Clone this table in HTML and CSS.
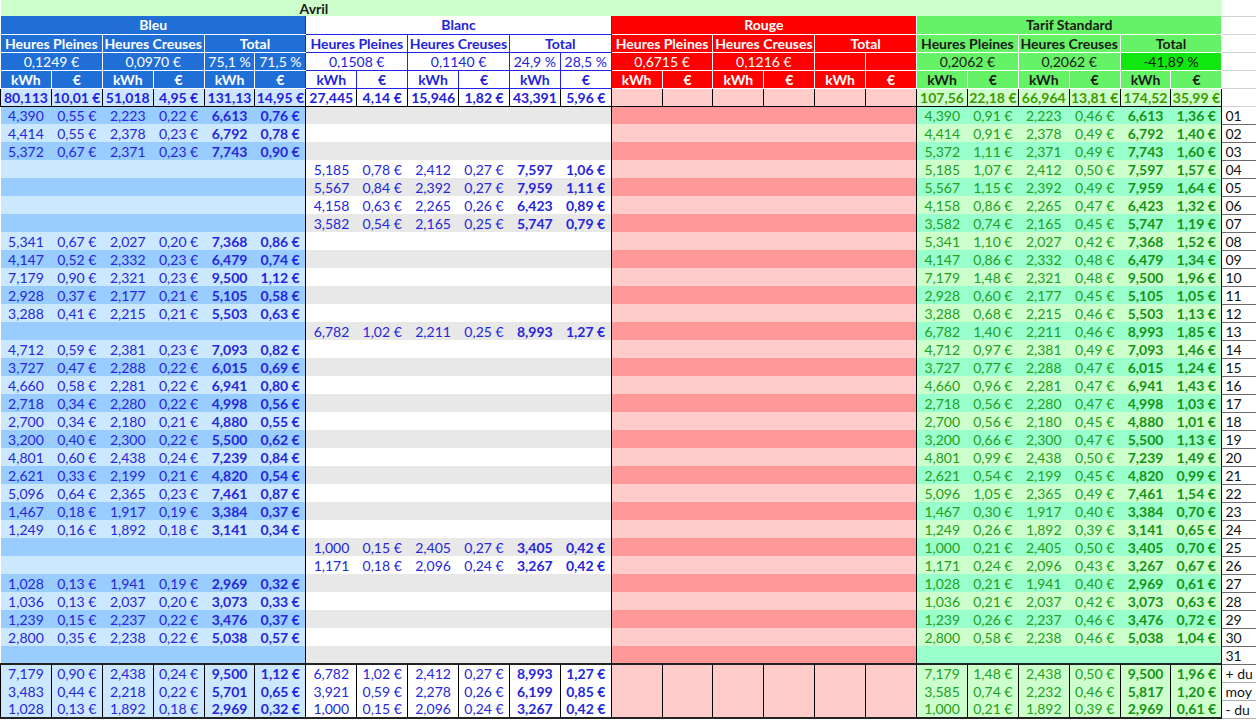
FILE: index.html
```html
<!DOCTYPE html>
<html lang="fr">
<head>
<meta charset="utf-8">
<title>Avril</title>
<link rel="stylesheet" href="styles.css">
</head>
<body>
<table class="sheet">
<colgroup>
<col class="c"><col class="c"><col class="c"><col class="c"><col class="c"><col class="c">
<col class="c"><col class="c"><col class="c"><col class="c"><col class="c"><col class="c">
<col class="c"><col class="c"><col class="c"><col class="c"><col class="c"><col class="c">
<col class="c"><col class="c"><col class="c"><col class="c"><col class="c"><col class="c">
<col class="d">
</colgroup>
<tbody id="sheet-body">
<tr class="r0"><td colspan="24" class="title">Avril</td><td class="dh"></td></tr>
<tr class="h h1">
<td colspan="6" class="hb gl">Bleu</td>
<td colspan="6" class="hw gl">Blanc</td>
<td colspan="6" class="hr">Rouge</td>
<td colspan="6" class="hg">Tarif Standard</td>
<td class="dh"></td>
</tr>
<tr class="h">
<td colspan="2" class="hb">Heures Pleines</td><td colspan="2" class="hb">Heures Creuses</td><td colspan="2" class="hb gl">Total</td>
<td colspan="2" class="hw">Heures Pleines</td><td colspan="2" class="hw">Heures Creuses</td><td colspan="2" class="hw gl">Total</td>
<td colspan="2" class="hr">Heures Pleines</td><td colspan="2" class="hr">Heures Creuses</td><td colspan="2" class="hr">Total</td>
<td colspan="2" class="hg">Heures Pleines</td><td colspan="2" class="hg">Heures Creuses</td><td colspan="2" class="hg">Total</td>
<td class="dh"></td>
</tr>
<tr class="h pr">
<td colspan="2" class="hb">0,1249 €</td><td colspan="2" class="hb">0,0970 €</td><td class="hb">75,1 %</td><td class="hb gl">71,5 %</td>
<td colspan="2" class="hw">0,1508 €</td><td colspan="2" class="hw">0,1140 €</td><td class="hw">24,9 %</td><td class="hw gl">28,5 %</td>
<td colspan="2" class="hr">0,6715 €</td><td colspan="2" class="hr">0,1216 €</td><td class="hr"></td><td class="hr"></td>
<td colspan="2" class="hg">0,2062 €</td><td colspan="2" class="hg">0,2062 €</td><td colspan="2" class="hg pct">-41,89 %</td>
<td class="dh"></td>
</tr>
<tr class="h">
<td class="hb">kWh</td><td class="hb">€</td><td class="hb">kWh</td><td class="hb">€</td><td class="hb">kWh</td><td class="hb gl">€</td>
<td class="hw">kWh</td><td class="hw">€</td><td class="hw">kWh</td><td class="hw">€</td><td class="hw">kWh</td><td class="hw gl">€</td>
<td class="hr">kWh</td><td class="hr">€</td><td class="hr">kWh</td><td class="hr">€</td><td class="hr">kWh</td><td class="hr">€</td>
<td class="hg">kWh</td><td class="hg">€</td><td class="hg">kWh</td><td class="hg">€</td><td class="hg">kWh</td><td class="hg">€</td>
<td class="dh"></td>
</tr>
<tr class="tot-row">
<td class="tb">80,113</td><td class="tb">10,01 €</td><td class="tb">51,018</td><td class="tb">4,95 €</td><td class="tb">131,13</td><td class="tb">14,95 €</td>
<td class="tw">27,445</td><td class="tw">4,14 €</td><td class="tw">15,946</td><td class="tw">1,82 €</td><td class="tw">43,391</td><td class="tw">5,96 €</td>
<td class="trd"></td><td class="trd"></td><td class="trd"></td><td class="trd"></td><td class="trd"></td><td class="trd"></td>
<td class="tg">107,56</td><td class="tg">22,18 €</td><td class="tg">66,964</td><td class="tg">13,81 €</td><td class="tg">174,52</td><td class="tg">35,99 €</td>
<td class="dh"></td>
</tr>
</tbody>
</table>
<script src="script.js"></script>
</body>
</html>
```

FILE: styles.css
```css
html, body {
  margin: 0;
  padding: 0;
  background: #ffffff;
  overflow: hidden;
}

body {
  font-family: Lato, "Liberation Sans", sans-serif;
  font-size: 14px;
  color: #111;
}

.sheet {
  width: 1256px;
  border-collapse: collapse;
  table-layout: fixed;
}

col.c { width: 50.9px; }
col.d { width: 34.4px; }

.sheet tr { height: 18px; }
.sheet tr.r0 { height: 16px; }

.sheet td {
  padding: 0;
  line-height: 15px;
  text-align: center;
  white-space: nowrap;
  overflow: hidden;
  border: 0;
}

/* title row */
.title {
  background: #ccffcc;
  font-weight: 700;
  text-align: left !important;
  padding-left: 299px !important;
  color: #1a1a1a;
}
.dh {
  background: #fff;
  border-bottom: 1px solid #d4d4d4 !important;
}

/* header rows */
.h td { font-weight: 700; }
.h.pr td { font-weight: 400; }

.hb {
  background: #1f6fd7;
  color: #fff;
  border: 1px solid #fff !important;
}
.hb.gl { border-right-color: #2323e6 !important; }

.hw {
  background: #fff;
  color: #2222dd;
  border: 1px solid #2323e6 !important;
}

.hr {
  background: #ff0000;
  color: #fff;
  border: 1px solid #ffffff !important;
}

.hg {
  background: #66f266;
  color: #1a1a1a;
  border: 1px solid #ffffff !important;
}
.hg.pct { background: #10e610; }

.h1 td { border-top: none !important; }

/* totals row */
.tot-row td { font-weight: 700; }
.tot-row td:not(.dh) { border: 1px solid #000 !important; }
.tb { background: #cce6ff; color: #2222dd; }
.tw { background: #fff; color: #2222dd; }
.trd { background: #ffcccc; }
.tg { background: #ccffcc; color: #3d9a00; }

/* data rows */
.bleu, .blanc { color: #2626dc; }
.rouge { color: #c00; }
.vert { color: #22a022; }
.tot { font-weight: 700; }
.vert.tot { color: #149414; }
.ge { border-right: 1px solid #000 !important; }

.odd .bleu { background: #99ccff; }
.even .bleu { background: #cce8ff; }
.odd .blanc { background: #e8e8e8; }
.even .blanc { background: #ffffff; }
.odd .rouge { background: #ff9999; }
.even .rouge { background: #ffcccc; }
.odd .vert { background: #99ffcc; }
.even .vert { background: #ccffcc; }

.day {
  background: #fff;
  color: #111;
  text-align: left !important;
  padding-left: 3px !important;
  border-left: 1px solid #000 !important;
  border-bottom: 1px solid #6a6a6a !important;
}

/* summary rows */
.sum td:not(.day) {
  border-left: 1px solid #000;
  border-right: 1px solid #000;
}
.sum .bleu { background: #cce8ff; }
.sum .blanc { background: #ffffff; }
.sum .rouge { background: #ffcccc; }
.sum .vert { background: #ccffcc; }
.sum.first td:not(.day) { border-top: 2px solid #222; }
.sum.last td:not(.day) { border-bottom: 2px solid #222; }
.sum .day { border-bottom-color: #b0b0b0 !important; }
```

FILE: script.js
```js
(function () {
  var D = [
    ['b', '4,390 0,55 2,223 0,22 6,613 0,76', '4,390 0,91 2,223 0,46 6,613 1,36'],
    ['b', '4,414 0,55 2,378 0,23 6,792 0,78', '4,414 0,91 2,378 0,49 6,792 1,40'],
    ['b', '5,372 0,67 2,371 0,23 7,743 0,90', '5,372 1,11 2,371 0,49 7,743 1,60'],
    ['w', '5,185 0,78 2,412 0,27 7,597 1,06', '5,185 1,07 2,412 0,50 7,597 1,57'],
    ['w', '5,567 0,84 2,392 0,27 7,959 1,11', '5,567 1,15 2,392 0,49 7,959 1,64'],
    ['w', '4,158 0,63 2,265 0,26 6,423 0,89', '4,158 0,86 2,265 0,47 6,423 1,32'],
    ['w', '3,582 0,54 2,165 0,25 5,747 0,79', '3,582 0,74 2,165 0,45 5,747 1,19'],
    ['b', '5,341 0,67 2,027 0,20 7,368 0,86', '5,341 1,10 2,027 0,42 7,368 1,52'],
    ['b', '4,147 0,52 2,332 0,23 6,479 0,74', '4,147 0,86 2,332 0,48 6,479 1,34'],
    ['b', '7,179 0,90 2,321 0,23 9,500 1,12', '7,179 1,48 2,321 0,48 9,500 1,96'],
    ['b', '2,928 0,37 2,177 0,21 5,105 0,58', '2,928 0,60 2,177 0,45 5,105 1,05'],
    ['b', '3,288 0,41 2,215 0,21 5,503 0,63', '3,288 0,68 2,215 0,46 5,503 1,13'],
    ['w', '6,782 1,02 2,211 0,25 8,993 1,27', '6,782 1,40 2,211 0,46 8,993 1,85'],
    ['b', '4,712 0,59 2,381 0,23 7,093 0,82', '4,712 0,97 2,381 0,49 7,093 1,46'],
    ['b', '3,727 0,47 2,288 0,22 6,015 0,69', '3,727 0,77 2,288 0,47 6,015 1,24'],
    ['b', '4,660 0,58 2,281 0,22 6,941 0,80', '4,660 0,96 2,281 0,47 6,941 1,43'],
    ['b', '2,718 0,34 2,280 0,22 4,998 0,56', '2,718 0,56 2,280 0,47 4,998 1,03'],
    ['b', '2,700 0,34 2,180 0,21 4,880 0,55', '2,700 0,56 2,180 0,45 4,880 1,01'],
    ['b', '3,200 0,40 2,300 0,22 5,500 0,62', '3,200 0,66 2,300 0,47 5,500 1,13'],
    ['b', '4,801 0,60 2,438 0,24 7,239 0,84', '4,801 0,99 2,438 0,50 7,239 1,49'],
    ['b', '2,621 0,33 2,199 0,21 4,820 0,54', '2,621 0,54 2,199 0,45 4,820 0,99'],
    ['b', '5,096 0,64 2,365 0,23 7,461 0,87', '5,096 1,05 2,365 0,49 7,461 1,54'],
    ['b', '1,467 0,18 1,917 0,19 3,384 0,37', '1,467 0,30 1,917 0,40 3,384 0,70'],
    ['b', '1,249 0,16 1,892 0,18 3,141 0,34', '1,249 0,26 1,892 0,39 3,141 0,65'],
    ['w', '1,000 0,15 2,405 0,27 3,405 0,42', '1,000 0,21 2,405 0,50 3,405 0,70'],
    ['w', '1,171 0,18 2,096 0,24 3,267 0,42', '1,171 0,24 2,096 0,43 3,267 0,67'],
    ['b', '1,028 0,13 1,941 0,19 2,969 0,32', '1,028 0,21 1,941 0,40 2,969 0,61'],
    ['b', '1,036 0,13 2,037 0,20 3,073 0,33', '1,036 0,21 2,037 0,42 3,073 0,63'],
    ['b', '1,239 0,15 2,237 0,22 3,476 0,37', '1,239 0,26 2,237 0,46 3,476 0,72'],
    ['b', '2,800 0,35 2,238 0,22 5,038 0,57', '2,800 0,58 2,238 0,46 5,038 1,04'],
    ['', '', '']
  ];

  var S = [
    ['+ du', '7,179 0,90 2,438 0,24 9,500 1,12', '6,782 1,02 2,412 0,27 8,993 1,27', '7,179 1,48 2,438 0,50 9,500 1,96'],
    ['moy', '3,483 0,44 2,218 0,22 5,701 0,65', '3,921 0,59 2,278 0,26 6,199 0,85', '3,585 0,74 2,232 0,46 5,817 1,20'],
    ['- du', '1,028 0,13 1,892 0,18 2,969 0,32', '1,000 0,15 2,096 0,24 3,267 0,42', '1,000 0,21 1,892 0,39 2,969 0,61']
  ];

  var body = document.getElementById('sheet-body');

  function group(tr, cls, str) {
    var vals = str ? str.split(' ') : null;
    for (var i = 0; i < 6; i++) {
      var td = document.createElement('td');
      td.className = cls + (i >= 4 ? ' tot' : '') + (i === 5 ? ' ge' : '');
      if (vals) td.textContent = vals[i] + (i % 2 ? ' €' : '');
      tr.appendChild(td);
    }
  }

  function day(tr, text) {
    var td = document.createElement('td');
    td.className = 'day';
    td.textContent = text;
    tr.appendChild(td);
  }

  D.forEach(function (r, idx) {
    var tr = document.createElement('tr');
    tr.className = (idx % 2 === 0) ? 'odd' : 'even';
    group(tr, 'bleu', r[0] === 'b' ? r[1] : '');
    group(tr, 'blanc', r[0] === 'w' ? r[1] : '');
    group(tr, 'rouge', '');
    group(tr, 'vert', r[2]);
    day(tr, (idx + 1 < 10 ? '0' : '') + (idx + 1));
    body.appendChild(tr);
  });

  S.forEach(function (r, idx) {
    var tr = document.createElement('tr');
    tr.className = 'sum' + (idx === 0 ? ' first' : '') + (idx === S.length - 1 ? ' last' : '');
    group(tr, 'bleu', r[1]);
    group(tr, 'blanc', r[2]);
    group(tr, 'rouge', '');
    group(tr, 'vert', r[3]);
    day(tr, r[0]);
    body.appendChild(tr);
  });
})();
```
